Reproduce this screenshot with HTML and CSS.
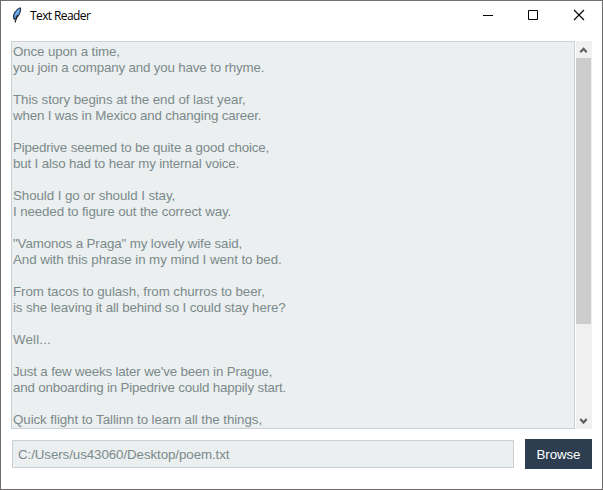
FILE: index.html
```html
<!DOCTYPE html>
<html lang="en">
<head>
<meta charset="utf-8">
<title>Text Reader</title>
<link rel="stylesheet" href="styles.css">
</head>
<body>
<div class="window">
  <header class="titlebar">
    <svg class="feather" width="12" height="16" viewBox="0 0 12 16">
      <path d="M9.5 .8C6.5 1.5 3 5 2.5 9L3 12.5L5 11.5C8 9 10 5 9.5 .8Z" fill="#4f8bd2" stroke="#18222e"/>
      <path d="M8 3L4.5 9" stroke="#8fbcf2" stroke-width="1.3"/>
      <path d="M6.5 8L4 15.5" stroke="#111" stroke-width="1.1"/>
    </svg>
    <h1 class="title">Text Reader</h1>
    <div class="controls">
      <svg width="45" height="29" viewBox="0 0 45 29"><path d="M10 14.5h10" stroke="#000"/></svg>
      <svg width="45" height="29" viewBox="0 0 45 29"><path d="M10.5 9.5h9v9h-9z" fill="none" stroke="#000"/></svg>
      <svg width="39" height="29" viewBox="0 0 39 29"><path d="M11 9l10 10M21 9L11 19" stroke="#000" stroke-width="1.1"/></svg>
    </div>
  </header>
  <main class="reader">
    <div class="text">Once upon a time,
<span class="tight">you join a company and you have to rhyme.</span>

<span class="loose">This story begins at the end of last year,</span>
<span class="tight">when I was in Mexico and changing career.</span>

<span class="tight">Pipedrive seemed to be quite a good choice,
but I also had to hear my internal voice.</span>

<span class="loose">Should I go or should I stay,</span>
I needed to figure out the correct way.

"Vamonos a Praga" my lovely wife said,
<span class="loose">And with this phrase in my mind I went to bed.</span>

<span class="loose">From tacos to gulash, from churros to beer,</span>
is she leaving it all behind so I could stay here?

<span class="wide">Well...</span>

<span class="tight">Just a few weeks later we've been in Prague,
and onboarding in Pipedrive could happily start.</span>

<span class="loose">Quick flight to Tallinn to learn all the things,</span></div>
    <div class="scrollbar">
      <svg width="16" height="17" viewBox="0 0 16 17"><path d="M4.3 11.3L7.5 7.8L10.7 11.3" fill="none" stroke="#606060" stroke-width="2.2"/></svg>
      <div class="thumb"></div>
      <svg class="down" width="16" height="17" viewBox="0 0 16 17"><path d="M4.3 7L7.5 10.5L10.7 7" fill="none" stroke="#606060" stroke-width="2.2"/></svg>
    </div>
  </main>
  <footer class="actions">
    <div class="path">C:/Users/us43060/Desktop/poem.txt</div>
    <button class="browse">Browse</button>
  </footer>
</div>
</body>
</html>
```
FILE: styles.css
```css
* { box-sizing: border-box; }
body { margin: 0; font-family: "Liberation Sans", Arial, sans-serif; }
svg { display: block; }
.window { width: 603px; height: 490px; border: 1px solid #6f6d6e; background: #fff; }
.titlebar { display: flex; height: 40px; padding-left: 10px; align-items: flex-start; }
.feather { margin-top: 6px; }
.title { margin: 0 0 0 7px; font: 12px/30px "Open Sans", sans-serif; letter-spacing: -0.6px; color: #000; }
.controls { display: flex; margin-left: auto; }
.reader { display: flex; height: 388px; margin: 0 10px; gap: 1px; }
.text { width: 564px; overflow: hidden; padding: 2px 1px; border: 1px solid #cbd0d6; background: #ebeff0; color: #7b8a8b; font-size: 13.33px; line-height: 16px; letter-spacing: -0.12px; white-space: pre; }
.tight { letter-spacing: -0.16px; }
.loose { letter-spacing: -0.07px; }
.wide { letter-spacing: 0.15px; }
.scrollbar { display: flex; flex-direction: column; width: 16px; background: #f0f0f0; }
.thumb { width: 15px; height: 266px; background: #cdcdcd; }
.down { margin-top: auto; }
.actions { display: flex; align-items: center; justify-content: space-between; height: 30px; margin: 10px 10px 0 11px; }
.path { width: 502px; height: 28px; padding-left: 5px; border: 1px solid #cbd0d6; background: #ebeff0; color: #7b8a8b; font-size: 13.33px; line-height: 27px; letter-spacing: -0.08px; }
.browse { width: 67px; height: 30px; padding: 1px 0 0; border: 0; background: #2c3e50; color: #fff; font: 13.33px/30px "Liberation Sans", Arial, sans-serif; letter-spacing: -0.1px; }
```
